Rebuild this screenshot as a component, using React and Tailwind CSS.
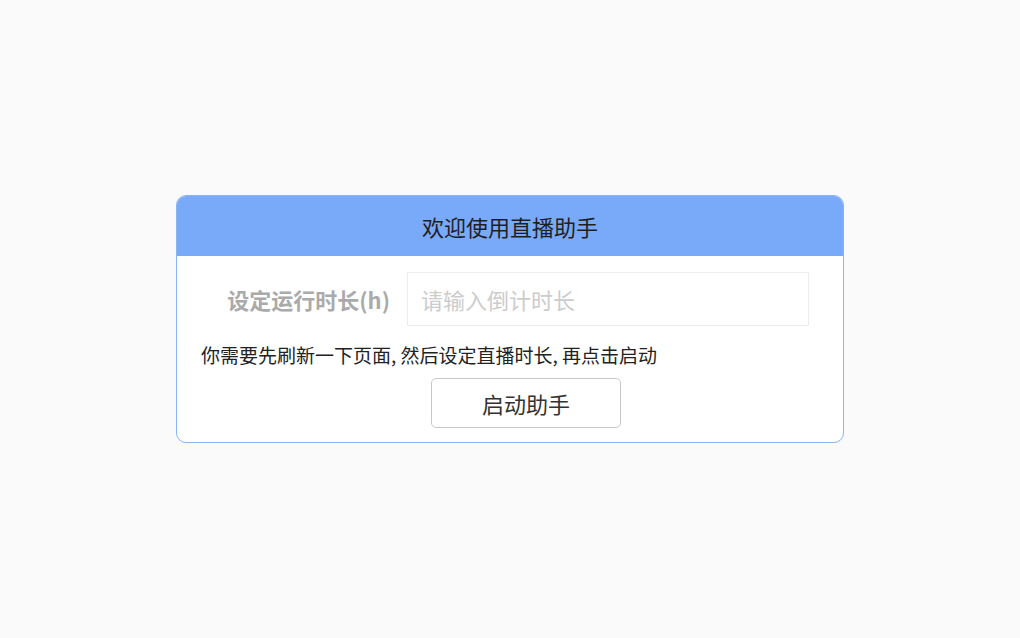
export default function App() {
  return (
    <div
      className="min-h-screen w-full bg-[#fafafa] flex items-center justify-center"
      style={{ fontFamily: '"Microsoft YaHei", "Noto Sans CJK SC", "Noto Sans", sans-serif' }}
    >
      <div className="w-[668px] rounded-[10px] border border-[#8ab4f2] bg-white overflow-hidden">
        <div className="h-[60px] bg-[#79a9f9] flex items-center justify-center text-[22px] text-[#1f1f1f]">
          欢迎使用直播助手
        </div>
        <div className="px-[24px] pt-[16px] pb-[14px]">
          <div className="flex items-center">
            <div className="w-[206px] pr-[17px] text-right text-[22px] font-bold text-[#aaaaaa] whitespace-nowrap">
              设定运行时长(h)
            </div>
            <input
              className="w-[402px] h-[54px] border border-[#ececec] px-[13px] text-[22px] outline-none placeholder:text-[#cccccc]"
              placeholder="请输入倒计时长"
            />
          </div>
          <div className="mt-[17px] text-[19px] leading-[24px] text-[#222222] whitespace-nowrap">
            你需要先刷新一下页面, 然后设定直播时长, 再点击启动
          </div>
          <button className="mt-[11px] ml-[230px] w-[190px] h-[50px] rounded-[5px] border border-[#c8c8c8] bg-white text-[22px] text-[#333333]">
            启动助手
          </button>
        </div>
      </div>
    </div>
  );
}
